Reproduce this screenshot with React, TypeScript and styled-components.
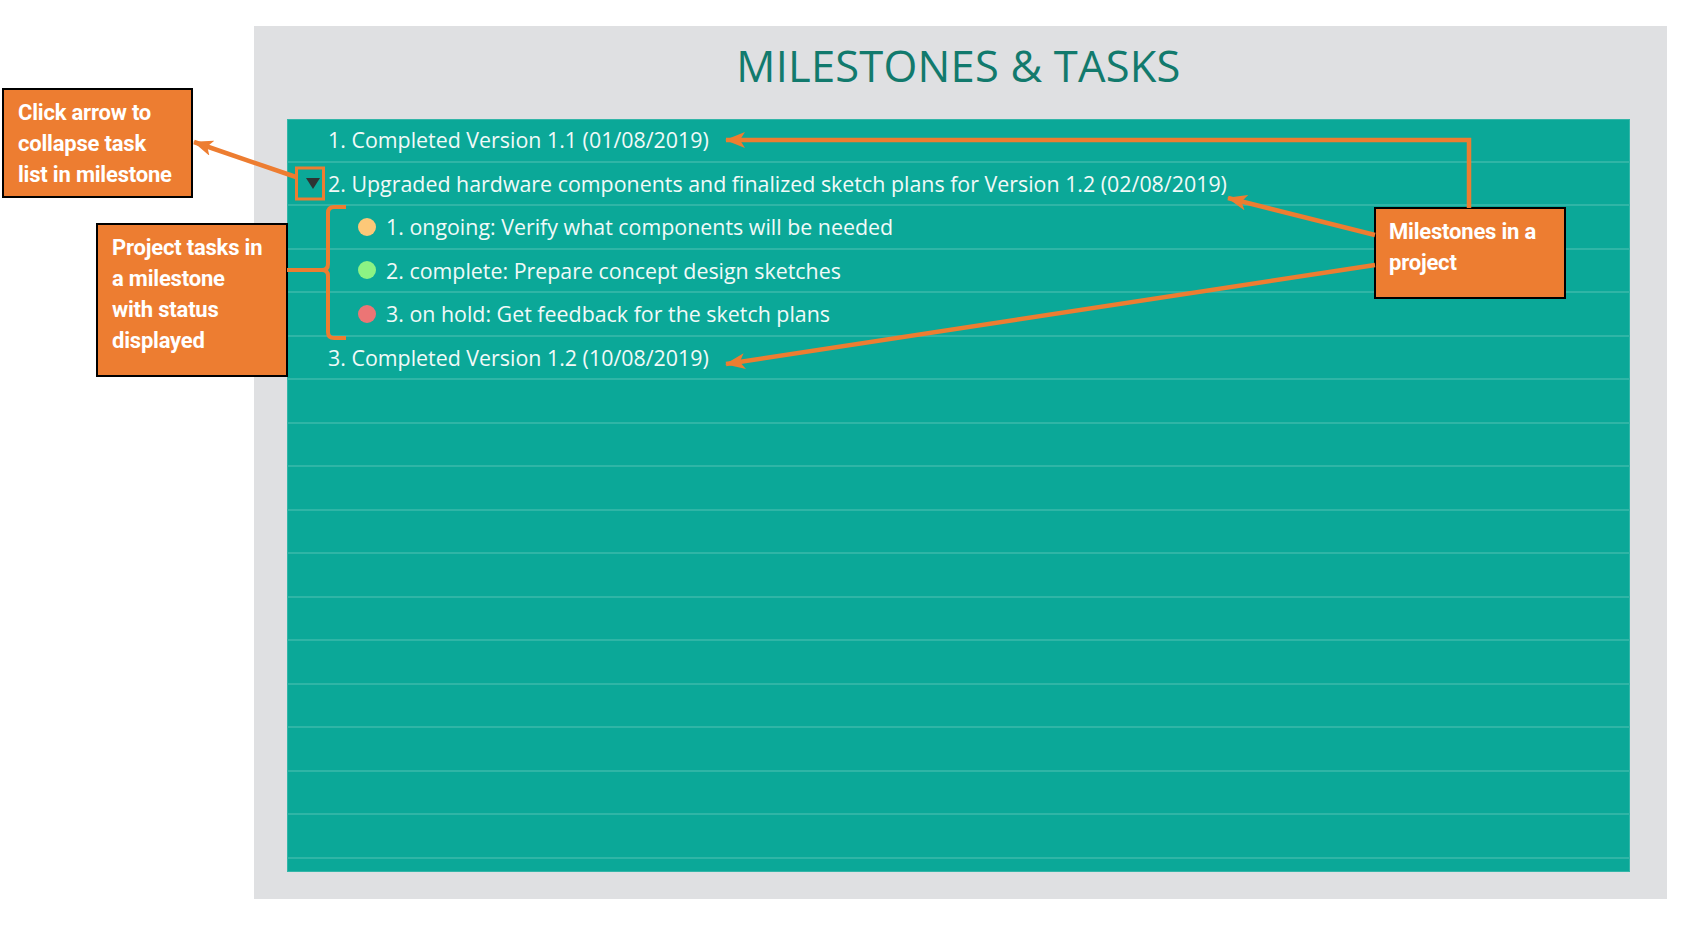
import styled, { createGlobalStyle } from "styled-components";

type Status = "ongoing" | "complete" | "hold";

type Row =
  | { kind: "milestone"; label: string; open?: boolean }
  | { kind: "task"; label: string; status: Status }
  | { kind: "empty" };

const rows: Row[] = [
  { kind: "milestone", label: "1. Completed Version 1.1 (01/08/2019)" },
  {
    kind: "milestone",
    open: true,
    label:
      "2. Upgraded hardware components and finalized sketch plans for Version 1.2 (02/08/2019)",
  },
  { kind: "task", status: "ongoing", label: "1. ongoing: Verify what components will be needed" },
  { kind: "task", status: "complete", label: "2. complete: Prepare concept design sketches" },
  { kind: "task", status: "hold", label: "3. on hold: Get feedback for the sketch plans" },
  { kind: "milestone", label: "3. Completed Version 1.2 (10/08/2019)" },
  ...Array.from({ length: 11 }, () => ({ kind: "empty" as const })),
];

const statusColors: Record<Status, string> = {
  ongoing: "#fdc878",
  complete: "#8cf384",
  hold: "#ec7575",
};

const GlobalStyle = createGlobalStyle`
  body {
    margin: 0;
    background: #ffffff;
    font-family: "Open Sans", "Noto Sans", sans-serif;
  }
`;

const Page = styled.div`
  position: relative;
  width: 1693px;
  height: 928px;
  box-sizing: border-box;
  padding: 26px 0 0 254px;
  overflow: hidden;
`;

const Board = styled.section`
  width: 1413px;
  height: 873px;
  box-sizing: border-box;
  padding: 0 37px 0 33px;
  background: #dfe0e2;
  display: flex;
  flex-direction: column;
`;

const Title = styled.h1`
  margin: 0;
  height: 93px;
  flex: none;
  display: flex;
  align-items: center;
  justify-content: center;
  padding-bottom: 15px;
  box-sizing: border-box;
  font-family: "Open Sans", sans-serif;
  font-weight: 400;
  font-size: 43.5px;
  letter-spacing: 0.2px;
  color: #127a6d;
`;

const List = styled.div`
  height: 753px;
  flex: none;
  overflow: hidden;
  background: #0ba898;
  box-shadow: inset 0 0 0 1px #33b6a8;
`;

const RowBox = styled.div<{ $indent: number }>`
  height: 43.5px;
  box-sizing: border-box;
  border-bottom: 2px solid #2fb5a6;
  display: flex;
  align-items: center;
  padding-left: ${(p) => p.$indent}px;
  color: #f1faf8;
  font-size: 21.4px;
  white-space: nowrap;
`;

const ToggleSlot = styled.span`
  width: 22px;
  height: 12px;
  display: flex;
  align-items: center;
`;

const Caret = styled.span`
  width: 0;
  height: 0;
  border-left: 7px solid transparent;
  border-right: 7px solid transparent;
  border-top: 11px solid #2e3333;
`;

const StatusDot = styled.span<{ $status: Status }>`
  width: 18px;
  height: 18px;
  border-radius: 50%;
  margin-right: 10px;
  background: ${(p) => statusColors[p.$status]};
`;

const Callout = styled.div<{ $x: number; $y: number; $w: number; $h: number; $pad: number }>`
  position: absolute;
  left: ${(p) => p.$x}px;
  top: ${(p) => p.$y}px;
  width: ${(p) => p.$w}px;
  height: ${(p) => p.$h}px;
  box-sizing: border-box;
  padding: 7px 0 0 ${(p) => p.$pad}px;
  background: #ed7d31;
  border: 2.5px solid #000;
  color: #fff;
  font-family: Roboto, "Liberation Sans", sans-serif;
  font-weight: 700;
  font-size: 22px;
  line-height: 31px;
  letter-spacing: -0.2px;
  white-space: nowrap;
`;

const Overlay = styled.svg`
  position: absolute;
  left: 0;
  top: 0;
  pointer-events: none;
`;

const ORANGE = "#ed7d31";

const Annotations = () => (
  <Overlay width={1693} height={928} viewBox="0 0 1693 928">
    <defs>
      <marker
        id="head"
        viewBox="0 0 20 16"
        refX="19"
        refY="8"
        markerWidth="20"
        markerHeight="16"
        markerUnits="userSpaceOnUse"
        orient="auto"
      >
        <path d="M0 0 L20 8 L0 16 L5 8 Z" fill={ORANGE} />
      </marker>
    </defs>
    <g fill="none" stroke={ORANGE} strokeWidth={4.5}>
      <path d="M296 177 L194 142" markerEnd="url(#head)" />
      <path d="M1469 208 V140 H726" markerEnd="url(#head)" />
      <path d="M1375 235 L1228 198" markerEnd="url(#head)" />
      <path d="M1375 265 L726 364" markerEnd="url(#head)" />
      <path
        strokeWidth={4}
        d="M346 207 H334 Q328 207 328 213 V264 Q328 270 322 270 H287 M322 270 Q328 270 328 276 V332 Q328 338 334 338 H346"
      />
      <rect x={296.5} y={168} width={27} height={31} strokeWidth={3} />
    </g>
  </Overlay>
);

export default function App() {
  return (
    <Page>
      <GlobalStyle />
      <Board>
        <Title>MILESTONES &amp; TASKS</Title>
        <List>
          {rows.map((row, i) => {
            if (row.kind === "milestone") {
              return (
                <RowBox key={i} $indent={19}>
                  <ToggleSlot>{row.open && <Caret />}</ToggleSlot>
                  {row.label}
                </RowBox>
              );
            }
            if (row.kind === "task") {
              return (
                <RowBox key={i} $indent={71}>
                  <StatusDot $status={row.status} />
                  {row.label}
                </RowBox>
              );
            }
            return <RowBox key={i} $indent={0} />;
          })}
        </List>
      </Board>

      <Callout $x={2} $y={88} $w={191} $h={110} $pad={14}>
        Click arrow to
        <br />
        collapse task
        <br />
        list in milestone
      </Callout>
      <Callout $x={96} $y={223} $w={192} $h={154} $pad={14}>
        Project tasks in
        <br />
        a milestone
        <br />
        with status
        <br />
        displayed
      </Callout>
      <Callout $x={1374} $y={207} $w={192} $h={92} $pad={13}>
        Milestones in a
        <br />
        project
      </Callout>

      <Annotations />
    </Page>
  );
}
